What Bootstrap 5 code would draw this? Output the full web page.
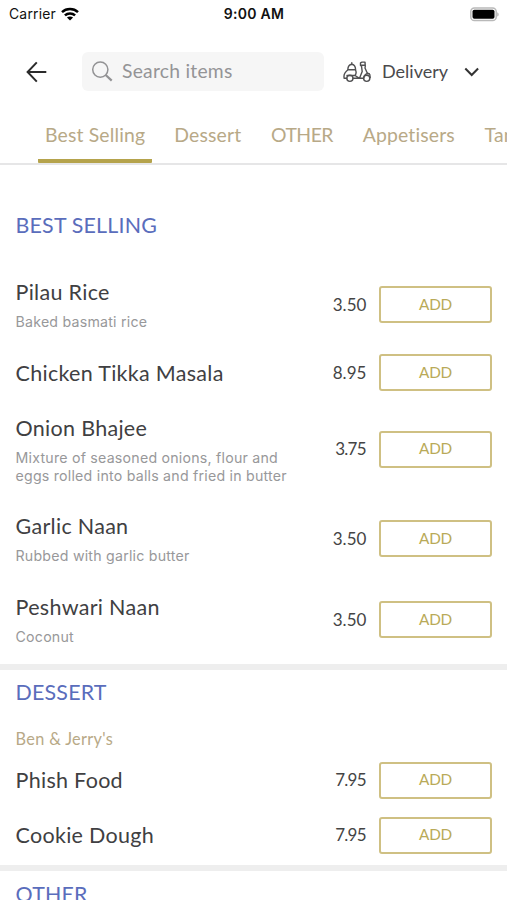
<!DOCTYPE html>
<html lang="en">
<head>
<meta charset="utf-8">
<meta name="viewport" content="width=device-width, initial-scale=1">
<title>Menu</title>
<link href="https://cdn.jsdelivr.net/npm/bootstrap@5.3.0/dist/css/bootstrap.min.css" rel="stylesheet">
<style>
body{font-family:Lato,"Open Sans",sans-serif;font-variant-ligatures:none;color:#3b3b3d;background:#fff;height:900px;overflow:hidden}
.statusbar{height:28px;line-height:28px;font-family:Inter,sans-serif;color:#111}
.side{width:200px}
.carrier{font-size:13.9px;letter-spacing:.22px;padding-left:9px}
.clock{font-weight:600;font-size:14px;letter-spacing:.3px;padding-left:1px}
.topbar{height:87px}
.back{margin-left:26px}
.search{width:242px;height:39px;margin-left:34px;padding-left:9px;gap:9px;border-radius:6px;background:#f6f6f6;color:#949496;font-size:19.3px;letter-spacing:.25px}
.scooter{margin:0 11px 0 19px}
.mode{font-size:18px;color:#4a4a4c}
.chevron{margin-left:16px}
.tabs{height:50px;border-bottom:2px solid #e6e6e7;color:#b8a987;font-size:19.4px;letter-spacing:.16px;padding-left:38px}
.tab-item{height:48px;line-height:40px;padding:0 7px;margin-right:15.7px;white-space:nowrap}
.tab-item.active{border-bottom:4px solid #b5a34c;border-radius:0 0 1px 1px;width:115.5px;margin-right:15px}
.tab-item.caps{letter-spacing:-.5px}
.heading{font-size:21.4px;line-height:26px;letter-spacing:.2px;color:#5a6dbc;margin:0;font-weight:400}
.first-section{padding-top:47px;padding-bottom:4px}
.first-section .heading{margin-bottom:26px}
.next-section{padding-top:9px}
.last-section{padding-top:10px}
.dish{padding:0 15px 0 15.5px}
.plain{height:55px}.one{height:81px}.two{height:98px}
.one .info,.two .info{padding-top:2px}
.plain:last-child{margin-bottom:2.5px}
.name{font-size:21.5px;line-height:24px;letter-spacing:.3px;color:#404042;font-weight:400;margin:0}
.desc{font:400 14.2px/17.5px Inter,sans-serif;letter-spacing:.22px;color:#98989a;margin:9px 0 0;white-space:nowrap}
.price{font-size:17px;letter-spacing:.05px;color:#444;margin-right:12.5px}
.price.tight{letter-spacing:-.8px;margin-right:13.3px}
.add,.add:hover{width:113px;height:37px;border:2px solid #cfc083;border-radius:3px;color:#b9aa58;font-size:15.3px;letter-spacing:-.2px;padding:0;line-height:1;transition:none}
.divider{height:6px;background:#eee}
.brand{font-size:16.3px;line-height:20px;letter-spacing:.35px;color:#b8a987;margin:24px 0 3.5px}
</style>
</head>
<body>
<header>
<div class="statusbar d-flex justify-content-between">
<div class="side carrier d-flex align-items-center"><span>Carrier</span>
<svg class="ms-1" width="20" height="15" viewBox="0 0 20 15"><g fill="none" stroke="#000" stroke-width="2.5"><path d="M2 5.1C6.4 1 13.6 1 18 5.1"/><path d="M4.9 8.4C7.7 5.8 12.3 5.8 15.1 8.4"/></g><path d="M6.9 10.5C8.6 9 11.4 9 13.1 10.5L10 13.6z"/></svg></div>
<span class="clock">9:00 AM</span>
<div class="side d-flex align-items-center justify-content-end pe-2"><svg width="30" height="15" viewBox="0 0 30 15"><rect x="1.8" y="1" width="25.4" height="12.6" rx="3.6" fill="#fff" stroke="#b9b9b9" stroke-width="1.5"/><rect x="3.5" y="2.8" width="22" height="9" rx="1.8"/><path d="M28.2 5.2c2 .8 2 3.600 0 4.400z" fill="#b9b9b9"/></svg></div>
</div>
<div class="topbar d-flex align-items-center">
<svg class="back" width="22" height="22" viewBox="0 0 22 22" fill="none" stroke="#2b2b2b" stroke-width="2"><path d="M20.3 11H1.8M10.8 1.4L1.6 11l9.2 9.6"/></svg>
<div class="search d-flex align-items-center"><svg width="22" height="22" viewBox="0 0 22 22" fill="none" stroke="#929294"><circle cx="9.3" cy="8.6" r="7.6" stroke-width="1.5"/><path d="M14.7 14l6 5.6" stroke-width="2.2"/></svg><span>Search items</span></div>
<svg class="scooter" width="28" height="22" viewBox="0 0 28 22" fill="none" stroke="#505052" stroke-width="1.4" stroke-linejoin="round" stroke-linecap="round"><path d="M3.8 17.3H1.2C.2 13.5 2.2 11 5 8.8H12.4C13.5 11 13.2 13 12 14.5H4M4.8 8.6C5 5.3 6.5 3.5 8.8 3.3 11.2 3.5 12.4 5.3 12.6 8.6M8.8 3.2V1.8M12 14.5L16.5 17.3H20.7C21 14 23.2 12.2 26.3 12.6M10 17.3H16.5L19.2 10.5 18.5 5.2 17.5 4.5V1.8L19 1.1H22L22.3 5.2 22 7 24 11.5 26.8 13.5 27.2 16.5M18.5 4.2H22.2"/><circle cx="6.9" cy="17.3" r="3.1"/><circle cx="23.7" cy="17.3" r="3.1"/></svg>
<span class="mode">Delivery</span>
<svg class="chevron" width="16" height="10" viewBox="0 0 16 10" fill="none" stroke="#333" stroke-width="2"><path d="M1.3 1.5L7.7 8l6.4-6.5"/></svg>
</div>
<nav class="tabs d-flex overflow-hidden">
<div class="tab-item active">Best Selling</div><div class="tab-item">Dessert</div><div class="tab-item caps">OTHER</div><div class="tab-item">Appetisers</div><div class="tab-item">Tandoori</div>
</nav>
</header>
<main>
<section class="first-section">
<h2 class="heading dish">BEST SELLING</h2>
<div class="dish one d-flex align-items-center"><div class="info flex-grow-1"><h3 class="name">Pilau Rice</h3><p class="desc">Baked basmati rice</p></div><span class="price">3.50</span><button class="btn add">ADD</button></div>
<div class="dish plain d-flex align-items-center"><h3 class="name flex-grow-1">Chicken Tikka Masala</h3><span class="price">8.95</span><button class="btn add">ADD</button></div>
<div class="dish two d-flex align-items-center"><div class="info flex-grow-1"><h3 class="name">Onion Bhajee</h3><p class="desc">Mixture of seasoned onions, flour and<br>eggs rolled into balls and fried in butter</p></div><span class="price tight">3.75</span><button class="btn add">ADD</button></div>
<div class="dish one d-flex align-items-center"><div class="info flex-grow-1"><h3 class="name">Garlic Naan</h3><p class="desc">Rubbed with garlic butter</p></div><span class="price">3.50</span><button class="btn add">ADD</button></div>
<div class="dish one d-flex align-items-center"><div class="info flex-grow-1"><h3 class="name">Peshwari Naan</h3><p class="desc">Coconut</p></div><span class="price">3.50</span><button class="btn add">ADD</button></div>
</section>
<div class="divider"></div>
<section class="next-section">
<h2 class="heading dish">DESSERT</h2>
<div class="brand dish">Ben &amp; Jerry's</div>
<div class="dish plain d-flex align-items-center"><h3 class="name flex-grow-1">Phish Food</h3><span class="price tight">7.95</span><button class="btn add">ADD</button></div>
<div class="dish plain d-flex align-items-center"><h3 class="name flex-grow-1">Cookie Dough</h3><span class="price tight">7.95</span><button class="btn add">ADD</button></div>
</section>
<div class="divider"></div>
<section class="last-section">
<h2 class="heading dish">OTHER</h2>
</section>
</main>
<script src="https://cdn.jsdelivr.net/npm/bootstrap@5.3.0/dist/js/bootstrap.bundle.min.js"></script>
</body>
</html>
